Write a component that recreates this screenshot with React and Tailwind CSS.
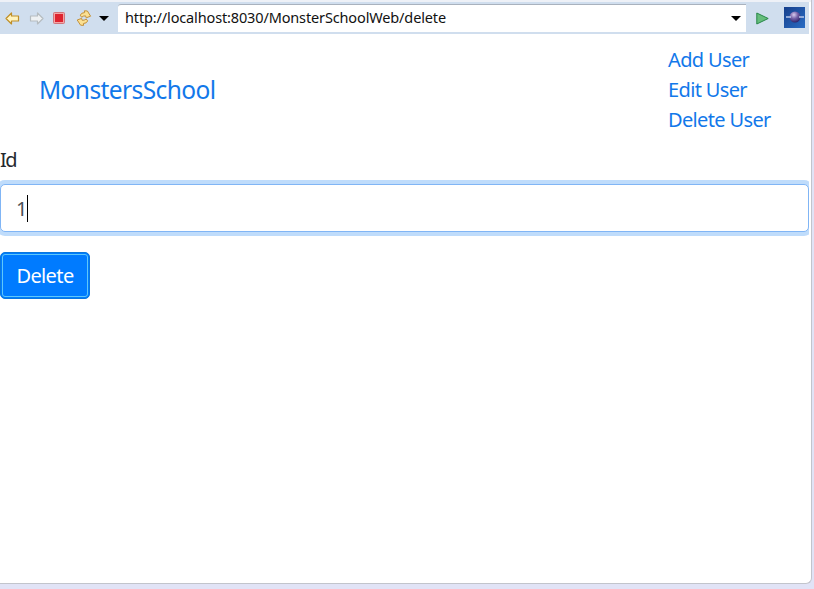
import React from "react";

function Arrow({ flip, fill, stroke }) {
  return (
    <svg width="15" height="13" viewBox="0 0 15 13" className={flip ? "-scale-x-100" : ""}>
      <path d="M1 6.5 6.5 1v3h7v5h-7v3z" fill={fill} stroke={stroke} strokeWidth="1.2" strokeLinejoin="round" />
    </svg>
  );
}

function RefreshIcon() {
  return (
    <svg width="16" height="16" viewBox="0 0 16 16">
      <g fill="#fbe092" stroke="#c4913a" strokeWidth="1" strokeLinejoin="round">
        <path d="M5.6 7.2 4.3 5.2Q5.2 2.6 8.6 2.6L8.400 .8 11.4 1l3.200 5.200-4.400 1.600-.6-1.900Q7.600 5.600 5.600 7.200z" />
        <path d="M10.200 9l1.500 1.900Q10.800 13.400 7.400 13.500l.2 1.900-3-.2L1.200 10l4.400-1.600.6 1.900Q8.200 10.600 10.200 9z" />
      </g>
    </svg>
  );
}

function Caret() {
  return (
    <svg width="10" height="5" viewBox="0 0 10 5">
      <path d="M0 0h10L5 5z" fill="#000" />
    </svg>
  );
}

function Toolbar() {
  return (
    <div className="flex h-8 items-center bg-[#d0deee]">
      <div className="flex w-[118px] shrink-0 items-center pl-[5px]">
        <Arrow fill="#fff3bd" stroke="#c08f28" />
        <span className="ml-[9px] flex">
          <Arrow flip fill="#eef1f3" stroke="#b5bcc0" />
        </span>
        <svg className="ml-[9px]" width="12" height="12" viewBox="0 0 12 12">
          <rect x=".5" y=".5" width="11" height="11" rx="1" fill="#f4a6a6" stroke="#d0757c" />
          <rect x="2" y="2" width="8" height="8" fill="#de2430" />
        </svg>
        <span className="ml-[11px] flex">
          <RefreshIcon />
        </span>
        <span className="ml-[7px] flex">
          <Caret />
        </span>
      </div>
      <div className="flex h-7 w-[628px] items-center justify-between rounded-tl-[3px] border-t border-[#a9b2be] bg-white pr-[5px] pb-px pl-[7px]">
        <span className="text-[14.5px] tracking-[-0.14px] text-[#111]">http://localhost:8030/MonsterSchoolWeb/delete</span>
        <Caret />
      </div>
      <svg className="ml-[10px]" width="13" height="13" viewBox="0 0 13 13">
        <path d="M.8 1v11L12.2 6.5z" fill="#66bd7c" stroke="#278747" strokeLinejoin="round" />
      </svg>
      <svg className="mb-px ml-[15px]" width="21" height="21" viewBox="0 0 21 21">
        <defs>
          <linearGradient id="sky" x1="0" y1="0" x2="1" y2="1">
            <stop offset="0" stopColor="#163f8b" />
            <stop offset="1" stopColor="#2a6cc4" />
          </linearGradient>
          <radialGradient id="globe" cx=".4" cy=".3" r=".7">
            <stop offset="0" stopColor="#d8cbee" />
            <stop offset=".5" stopColor="#7461a8" />
            <stop offset="1" stopColor="#30246c" />
          </radialGradient>
        </defs>
        <rect width="21" height="21" fill="url(#sky)" />
        <circle cx="11" cy="10" r="5.5" fill="url(#globe)" />
        <path d="M2 10h5M15 10h5" stroke="#b7c7ea" strokeWidth="1.3" />
      </svg>
    </div>
  );
}

export default function App() {
  return (
    <div className="h-[589px] w-[814px] overflow-hidden bg-[#e1e3f6] font-['Noto_Sans','Open_Sans',sans-serif]">
      <div className="h-[584px] w-[812px] rounded-br-[6px] border-r border-b border-[#c2c4cc] bg-white">
        <div className="h-0.5 bg-[#eef1f7]" />
        <div className="mr-0.5">
          <Toolbar />
        </div>
        <header className="flex h-[111px] items-center justify-between pr-[40px] pl-[39px] text-[#1278ea]">
          <a className="text-[24.5px] leading-[38px] tracking-[-0.6px]">MonstersSchool</a>
          <nav className="flex w-[103px] flex-col text-[20px] leading-[30px] tracking-[-0.64px] whitespace-nowrap">
            <a>Add User</a>
            <a>Edit User</a>
            <a>Delete User</a>
          </nav>
        </header>
        <main>
          <label className="block h-[39px] text-[20px] leading-[30px] tracking-[-1.5px] text-[#24292e]">Id</label>
          <div className="flex h-12 w-[809px] items-center rounded-[5px] border border-[#80b5f5] bg-white pl-[15px] shadow-[0_0_0_4px_#bfdcfb] [clip-path:inset(-4px_0_-4px_0)]">
            <span className="pt-0.5 text-[20px] text-[#495057]">1</span>
            <span className="h-[27px] w-px bg-black" />
          </div>
          <button className="mt-5 flex h-[47px] w-[90px] items-center justify-center rounded-[5px] border border-[#0878dd] bg-[#007bff] p-px">
            <span className="flex h-full w-full items-center justify-center rounded-[3px] border border-[#5dc8fa] text-[20px] tracking-[-0.6px] text-white">
              Delete
            </span>
          </button>
        </main>
      </div>
    </div>
  );
}
